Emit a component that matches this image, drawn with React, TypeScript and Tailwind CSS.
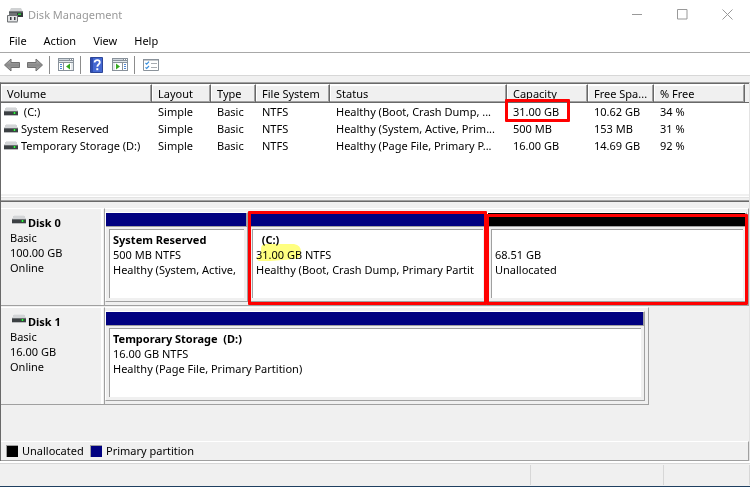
import type { ReactNode } from "react";

type Volume = {
  name: string;
  layout: string;
  type: string;
  fs: string;
  status: string;
  capacity: string;
  free: string;
  percent: string;
  marked?: boolean;
};

const volumes: Volume[] = [
  { name: "\u00a0(C:)", layout: "Simple", type: "Basic", fs: "NTFS", status: "Healthy (Boot, Crash Dump, ...", capacity: "31.00 GB", free: "10.62 GB", percent: "34 %", marked: true },
  { name: "System Reserved", layout: "Simple", type: "Basic", fs: "NTFS", status: "Healthy (System, Active, Prim...", capacity: "500 MB", free: "153 MB", percent: "31 %" },
  { name: "Temporary Storage (D:)", layout: "Simple", type: "Basic", fs: "NTFS", status: "Healthy (Page File, Primary P...", capacity: "16.00 GB", free: "14.69 GB", percent: "92 %" },
];

const columns = ["Volume", "Layout", "Type", "File System", "Status", "Capacity", "Free Spa...", "% Free"];

function DriveIcon() {
  return (
    <svg width="14" height="9" viewBox="0 0 14 9" className="shrink-0" shapeRendering="crispEdges" aria-hidden="true">
      <path d="M2 0h10l2 4H0z" fill="#d3d5d7" />
      <path d="M2 0h10v1H2z" fill="#e6e7e8" />
      <path d="M0 4h14v4H0z" fill="#3c4043" />
      <path d="M0 4h14v1H0z" fill="#6b6f72" />
      <path d="M0 8h14v1H0z" fill="#b9bbbd" />
      <path d="M9 5h3v2H9z" fill="#1c8a28" />
      <path d="M10 5h1v2h-1z" fill="#3df04c" />
    </svg>
  );
}

function AppIcon() {
  return (
    <svg width="16" height="16" viewBox="0 0 16 16" className="shrink-0" aria-hidden="true">
      <path d="M4 1h10l2 4H2z" fill="#d0d2d3" />
      <path d="M2 4.5h14V10H2z" fill="#34383a" />
      <path d="M2 4.5h14v1H2z" fill="#777b7d" />
      <path d="M11 6.500h3v1.500h-3z" fill="#29d338" />
      <path d="M2 6h8v3H2z" fill="#6f7375" />
      <path d="M.5 8.500h10V15H.5z" fill="#e4e5e6" stroke="#6e7173" />
      <path d="M3 10h1.500v3H3zM7 10h1.500v3H7z" fill="#3b3f42" />
      <path d="M1 14h10v1H1z" fill="#9a9da0" />
    </svg>
  );
}

function ArrowIcon({ right = false }: { right?: boolean }) {
  return (
    <svg width="16" height="14" viewBox="0 0 16 14" aria-hidden="true">
      <defs>
        <linearGradient id={right ? "arrowR" : "arrowL"} x1="0" y1="0" x2="0" y2="1">
          <stop offset="0" stopColor="#b8b8b8" />
          <stop offset="0.5" stopColor="#8a8a8a" />
          <stop offset="1" stopColor="#a8a8a8" />
        </linearGradient>
      </defs>
      <path
        d={right ? "M15.500 7 9 1v3.500H.5v5H9V13z" : "M.5 7 7 1v3.500h8.500v5H7V13z"}
        fill={right ? "url(#arrowR)" : "url(#arrowL)"}
        stroke="#707070"
        strokeLinejoin="round"
      />
    </svg>
  );
}

function PaneIcon({ right = false }: { right?: boolean }) {
  return (
    <svg width="16" height="13" viewBox="0 0 16 13" shapeRendering="crispEdges" aria-hidden="true">
      <path d="M0 0h16v13H0z" fill="#89929b" />
      <path d="M1 1h10v1H1z" fill="#cfd6dc" />
      <path d="M12 1h1v1h-1zM14 1h1v1h-1z" fill="#fff" />
      <path d="M1 3h14v1H1z" fill="#e3e8ec" />
      <path d="M1 5h14v7H1z" fill="#fff" />
      {right ? (
        <>
          <path d="M10 5h1v7h-1z" fill="#89929b" />
          <path d="M12 6h2v1h-2zM12 8h2v1h-2zM12 10h2v1h-2z" fill="#4d86d6" />
          <path d="M1 5h2v7H1z" fill="#e5e9ec" />
          <path d="M4 5.500l4 3-4 3z" fill="#36a820" shapeRendering="auto" />
        </>
      ) : (
        <>
          <path d="M5 5h1v7H5z" fill="#89929b" />
          <path d="M2 6h2v1H2zM2 8h2v1H2zM2 10h2v1H2z" fill="#4d86d6" />
          <path d="M13 5h2v7h-2z" fill="#e5e9ec" />
          <path d="M12 5.500v6l-4-3z" fill="#36a820" shapeRendering="auto" />
        </>
      )}
    </svg>
  );
}

function HelpIcon() {
  return (
    <svg width="13" height="16" viewBox="0 0 13 16" aria-hidden="true">
      <path d="M.5.5h12v15H.5z" fill="#4468d2" stroke="#2d4698" />
      <path d="M1 1h2v14H1z" fill="#2f4db0" />
      <path d="M4.600 5.400c0-3 5.200-2.900 5.200 0 0 2-2.500 2.100-2.500 4.400" fill="none" stroke="#fff" strokeWidth="1.8" />
      <path d="M6.300 11.200h2v2h-2z" fill="#fff" />
    </svg>
  );
}

function ChecklistIcon() {
  return (
    <svg width="16" height="12" viewBox="0 0 16 12" aria-hidden="true">
      <path d="M.5.5h15v11H.5z" fill="#fff" stroke="#8b939b" />
      <path d="M0 0h16v1.500H0z" fill="#8b939b" />
      <path d="M2.500 4l1.200 1.200L6 2.600M2.500 8.300l1.200 1.200L6 7" fill="none" stroke="#3a8fdc" strokeWidth="1.2" />
      <path d="M8 4h6v1H8zM8 8h6v1H8z" fill="#a8adb2" />
    </svg>
  );
}

function ToolButton({ label, children, className }: { label: string; children: ReactNode; className: string }) {
  return (
    <button type="button" aria-label={label} className={`flex h-5 items-center justify-center ${className}`}>
      {children}
    </button>
  );
}

function Separator({ className }: { className: string }) {
  return <div className={`h-[18px] w-px bg-[#8c8c8c] ${className}`} />;
}

function CaptionButton({ label, d }: { label: string; d: string }) {
  return (
    <button type="button" aria-label={label} className="flex h-full w-[45px] items-center justify-center pb-0.5">
      <svg width="11" height="11" viewBox="0 0 11 11" aria-hidden="true">
        <path d={d} fill="none" stroke="#999" />
      </svg>
    </button>
  );
}

function Partition({ bar, width, mark, children }: { bar: string; width: string; mark?: ReactNode; children: ReactNode }) {
  return (
    <div className={`relative flex min-w-0 flex-col border border-t-white border-r-[#a0a0a0] border-b-[#a0a0a0] border-l-white ${width}`}>
      <div className={`h-3.5 border-r border-b border-[#a0a0a0] ${bar}`} />
      <div className="mx-[3px] mt-0.5 mb-[3px] flex-1 overflow-hidden border-t border-l border-[#a0a0a0] bg-white pt-0.5 pl-[3px] leading-[15px] whitespace-nowrap">
        {children}
      </div>
      {mark}
    </div>
  );
}

function Disk({ name, size, width, children }: { name: string; size: string; width: string; children: ReactNode }) {
  return (
    <section className="flex h-[98px]">
      <div className="w-26 shrink-0 border-t border-r border-b border-t-white border-r-[#a0a0a0] border-b-[#a0a0a0]">
        <div className="mr-px h-full border-r-2 border-white pt-1.5 pl-[9px] leading-[15px]">
          <h2 className="flex gap-0.5 pl-0.5 font-bold">
            <DriveIcon />
            {name}
          </h2>
          <p>Basic</p>
          <p>{size}</p>
          <p>Online</p>
        </div>
      </div>
      <div className={`flex min-w-0 border-t border-r border-b border-t-white border-r-[#a0a0a0] border-b-[#a0a0a0] pt-[3px] pb-[3px] ${width}`}>
        {children}
      </div>
    </section>
  );
}

export default function App() {
  return (
    <div className="flex min-h-screen flex-col border-b border-[#1f3f60] bg-[#f0f0f0] font-['Noto_Sans','Open_Sans',sans-serif] text-[11px] text-black">
      <header className="flex h-[30px] items-center bg-white pl-[7px]">
        <AppIcon />
        <h1 className="flex-1 pl-[5px] text-[#999]">Disk Management</h1>
        <CaptionButton label="Minimize" d="M0 5.500h10" />
        <CaptionButton label="Maximize" d="M.5.5h9.500v9.500H.5z" />
        <CaptionButton label="Close" d="M.5.5l10 10M10.500.5l-10 10" />
      </header>

      <nav className="flex h-[23px] items-center gap-[17px] border-b border-[#a8a8a8] bg-white pl-[9px]">
        <button type="button">File</button>
        <button type="button">Action</button>
        <button type="button">View</button>
        <button type="button">Help</button>
      </nav>

      <div className="flex h-[23px] items-center border-b border-[#d7d7d7] bg-white pt-px pl-1">
        <ToolButton label="Back" className="w-4"><ArrowIcon /></ToolButton>
        <ToolButton label="Forward" className="ml-[7px] w-4"><ArrowIcon right /></ToolButton>
        <Separator className="ml-1.5" />
        <ToolButton label="Show or hide console tree" className="ml-2 w-4"><PaneIcon /></ToolButton>
        <Separator className="ml-1.5" />
        <ToolButton label="Help topics" className="ml-[9px] w-[13px]"><HelpIcon /></ToolButton>
        <ToolButton label="Show or hide action pane" className="ml-[9px] w-4"><PaneIcon right /></ToolButton>
        <Separator className="ml-1.5" />
        <ToolButton label="Settings" className="ml-2 w-4"><ChecklistIcon /></ToolButton>
      </div>

      <main className="mt-1.5 flex flex-1 flex-col border-t border-r border-l border-t-[#a0a0a0] border-r-[#e3e3e3] border-l-[#696969]">
        <div className="h-[111px] border-t border-[#696969] bg-white">
          <table className="w-full table-fixed border-separate border-spacing-0 text-left whitespace-nowrap">
            <colgroup>
              <col className="w-[151px]" />
              <col className="w-[59px]" />
              <col className="w-[45px]" />
              <col className="w-[74px]" />
              <col className="w-[177px]" />
              <col className="w-[81px]" />
              <col className="w-[66px]" />
              <col className="w-[91px]" />
              <col />
            </colgroup>
            <thead>
              <tr>
                {columns.map((c) => (
                  <th key={c} className="h-[19px] border-t border-r border-b border-t-white border-r-[#696969] border-b-[#696969] bg-[#f0f0f0] p-0 pl-1.5 leading-4 font-normal shadow-[inset_-1px_-1px_#a0a0a0,inset_1px_1px_#ffffff]">
                    {c}
                  </th>
                ))}
                <td className="border-b border-[#696969] bg-[#f0f0f0] p-0" />
              </tr>
            </thead>
            <tbody>
              {volumes.map((v) => (
                <tr key={v.name} className="h-[17px] leading-[17px]">
                  <td className="p-0 pl-[3px]">
                    <span className="flex items-center gap-[3px]">
                      <DriveIcon />
                      {v.name}
                    </span>
                  </td>
                  <td className="p-0 pl-1.5">{v.layout}</td>
                  <td className="p-0 pl-1.5">{v.type}</td>
                  <td className="p-0 pl-1.5">{v.fs}</td>
                  <td className="p-0 pl-1.5">{v.status}</td>
                  <td className="relative p-0 pl-1.5">
                    {v.capacity}
                    {v.marked && <span className="absolute -top-1 -left-0.5 h-[23px] w-[65px] rounded-[1px] border-3 border-[#ff0000]" />}
                  </td>
                  <td className="p-0 pl-1.5">{v.free}</td>
                  <td className="p-0 pl-1.5">{v.percent}</td>
                </tr>
              ))}
            </tbody>
          </table>
        </div>

        <div className="flex h-2 flex-col justify-between border-b border-[#696969]">
          <div className="mt-0.5 h-0.5 border-b border-[#e3e3e3] bg-white" />
          <div className="h-px bg-[#a0a0a0]" />
        </div>

        <div className="flex flex-1 flex-col gap-px pt-1.5">
          <Disk name="Disk 0" size="100.00 GB" width="flex-1 pr-px">
            <Partition bar="bg-[#000080]" width="w-[143px]">
              <p className="font-bold">System Reserved</p>
              <p>500 MB NTFS</p>
              <p>Healthy (System, Active,</p>
            </Partition>
            <Partition
              bar="bg-[#000080]"
              width="w-[239px]"
              mark={
                <>
                  <svg className="absolute top-[30px] left-[7px] mix-blend-multiply" width="46" height="20" viewBox="0 0 46 20" aria-hidden="true">
                    <path d="M8 1H38Q45 2 45 9Q45 15 39 16L14 18H3Q0 17 1 14Q6 12 5 6Q5 2 8 1z" fill="#ffff80" />
                  </svg>
                  <span className="absolute inset-x-[-1px] -top-0.5 -bottom-1 rounded-[1px] border-3 border-[#ff0000]" />
                </>
              }
            >
              <p className="font-bold">&nbsp;&nbsp;(C:)</p>
              <p>31.00 GB NTFS</p>
              <p>Healthy (Boot, Crash Dump, Primary Partit</p>
            </Partition>
            <Partition
              bar="bg-black"
              width="flex-1"
              mark={<span className="absolute -inset-x-0.5 top-px -bottom-1 rounded-[1px] border-3 border-[#ff0000]" />}
            >
              <p className="pt-[15px]">68.51 GB</p>
              <p>Unallocated</p>
            </Partition>
          </Disk>

          <Disk name="Disk 1" size="16.00 GB" width="w-[544px] pr-[3px]">
            <Partition bar="bg-[#000080]" width="flex-1">
              <p className="font-bold">Temporary Storage&nbsp; (D:)</p>
              <p>16.00 GB NTFS</p>
              <p>Healthy (Page File, Primary Partition)</p>
            </Partition>
          </Disk>
        </div>

        <div className="flex h-5 items-center border-t border-r border-b border-t-white border-r-[#a0a0a0] border-b-[#a0a0a0] pl-[5px]">
          <span className="size-3 border-t border-l border-[#a0a0a0] bg-black" />
          <span className="w-[68px] pl-1">Unallocated</span>
          <span className="ml-1 size-3 border-t border-l border-[#a0a0a0] bg-[#000080]" />
          <span className="pl-1">Primary partition</span>
        </div>
      </main>

      <footer className="flex h-[25px] border-t-2 border-white">
        <div className="flex flex-1 border-t border-[#d7d7d7] py-px">
          <div className="flex-1 border-r border-[#d7d7d7]" />
          <div className="w-[133px] border-r border-[#d7d7d7]" />
          <div className="w-[86px] border-r border-[#d7d7d7]" />
        </div>
      </footer>
    </div>
  );
}
